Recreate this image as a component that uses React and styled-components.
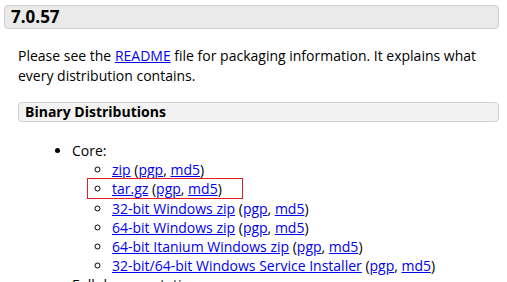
import React from 'react'
import styled, { createGlobalStyle } from 'styled-components'

const Global = createGlobalStyle`
  body {
    margin: 0;
    background: #fff;
    font-family: "Open Sans", "Liberation Sans", sans-serif;
    color: #000;
  }
`

const Page = styled.div`
  padding: 5px 8px 0 4px;
`

const VersionHeader = styled.h3`
  margin: 0;
  padding: 0 6px;
  height: 22px;
  line-height: 22px;
  font-size: 17px;
  font-weight: bold;
  background: #eaeaea;
  border: 1px solid #cfcfcf;
  border-radius: 4px;
`

const Section = styled.div`
  padding-left: 14px;
`

const Text = styled.p`
  margin: 17px 0 0 0;
  font-size: 14px;
  line-height: 19.5px;
`

const A = styled.a`
  color: #0000ee;
  text-decoration: underline;
`

const SubHeader = styled.h4`
  margin: 17px 0 0 0;
  padding: 0 6px;
  height: 18px;
  line-height: 18px;
  font-size: 14px;
  font-weight: bold;
  background: #f2f2f2;
  border: 1px solid #cfcfcf;
  border-radius: 4px;
`

const List = styled.ul`
  margin: 19px 0 0 0;
  padding-left: 54px;
  font-size: 14px;
  line-height: 19.2px;
  list-style: ${({ $kind }) => $kind};
`

const SubList = styled.ul`
  margin: 0;
  padding-left: 40px;
  list-style: circle;
  color: #000;
`

const Item = styled.li`
  ${({ $marked }) => $marked && `
    position: relative;
    &::after {
      content: '';
      position: absolute;
      left: -25px;
      top: -1px;
      width: 154px;
      height: 19px;
      border: 1px solid #e02020;
      pointer-events: none;
    }
  `}
`

const files = [
  'zip',
  'tar.gz',
  '32-bit Windows zip',
  '64-bit Windows zip',
  '64-bit Itanium Windows zip',
  '32-bit/64-bit Windows Service Installer',
]

const App = () => {
  return (
    <Page>
      <Global />
      <VersionHeader>7.0.57</VersionHeader>
      <Section>
        <Text>
          Please see the <A href="#">README</A> file for packaging information. It explains what
          every distribution contains.
        </Text>
        <SubHeader>Binary Distributions</SubHeader>
        <List $kind="disc">
          <li>
            Core:
            <SubList>
              {files.map((f) => (
                <Item key={f} $marked={f === 'tar.gz'}>
                  <A href="#">{f}</A> (<A href="#">pgp</A>, <A href="#">md5</A>)
                </Item>
              ))}
            </SubList>
          </li>
          <li>Full documentation:</li>
        </List>
      </Section>
    </Page>
  )
}

export default App
